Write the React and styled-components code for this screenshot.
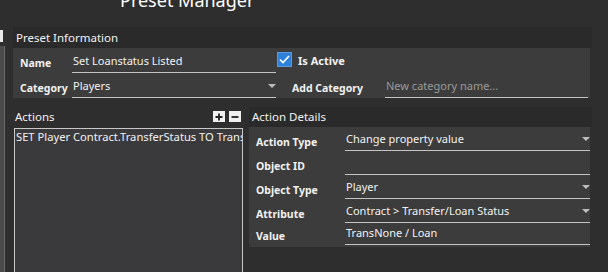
import React from 'react';
import styled, { createGlobalStyle } from 'styled-components';

const GlobalStyle = createGlobalStyle`
  html, body {
    margin: 0;
    padding: 0;
    background: #2e2e2e;
  }
  * {
    box-sizing: border-box;
  }
`;

const Window = styled.div`
  width: 608px;
  height: 272px;
  overflow: hidden;
  background: #2e2e2e;
  color: #f2f2f2;
  font-family: 'Noto Sans', 'Open Sans', sans-serif;
  font-size: 11px;
  display: grid;
  grid-template-columns: 13px 1fr;
`;

const SideStrip = styled.div`
  display: flex;
  flex-direction: column;
  padding-top: 30px;
  gap: 4px;
`;

const SideTab = styled.div`
  width: 3px;
  height: 12px;
  background: #e8e8e8;
`;

const SideBar = styled.div`
  width: 5px;
  flex: 1;
  background: #4a4a4a;
  border-right: 1px solid #6a6a6a;
`;

const Main = styled.div`
  display: flex;
  flex-direction: column;
  padding-right: 16px;
`;

const Title = styled.div`
  font-size: 18px;
  line-height: 18px;
  height: 16px;
  margin-top: -9px;
  margin-bottom: 20px;
  padding-left: 107px;
  color: #ffffff;
`;

const Group = styled.section`
  display: flex;
  flex-direction: column;
`;

const GroupHeader = styled.div`
  height: ${p => p.$h}px;
  line-height: ${p => p.$h}px;
  background: #2a2a2a;
  padding-left: ${p => p.$pad}px;
  font-size: 11.5px;
`;

const GroupBody = styled.div`
  background: #3c3c3c;
  margin-right: 2px;
`;

const InfoGrid = styled.div`
  display: grid;
  grid-template-columns: 52px 204px 16px 93px 203px;
  grid-auto-rows: 25px;
  padding-left: 7px;
`;

const DetailsGrid = styled.div`
  display: grid;
  grid-template-columns: 89px 245px;
  grid-template-rows: 24px 24px 24px 24px 22px;
  padding-left: 7px;
  padding-bottom: 2px;
`;

const Label = styled.div`
  align-self: end;
  grid-column: ${p => p.$col || 'auto'};
  font-weight: 700;
  font-size: 10.5px;
  line-height: 17px;
  padding-bottom: ${p => p.$lift || 0}px;
  white-space: nowrap;
`;

const Field = styled.div`
  align-self: end;
  position: relative;
  height: 21px;
  border-bottom: 1px solid #c4c4c4;
  padding: 0 16px 0 1px;
  line-height: 17px;
  font-size: 11px;
  color: ${p => (p.$placeholder ? '#9a9a9a' : '#f2f2f2')};
  white-space: nowrap;
  overflow: hidden;
`;

const Arrow = styled.span`
  position: absolute;
  right: 0;
  top: 7px;
  width: 0;
  height: 0;
  border-left: 4px solid transparent;
  border-right: 4px solid transparent;
  border-top: 4px solid #bdbdbd;
`;

const CheckCell = styled.div`
  align-self: start;
  padding-top: 4px;
  padding-left: 1px;
`;

const CheckBox = styled.div`
  width: 15px;
  height: 15px;
  background: #2f80d8;
  border: 1px solid #5a9be0;
  display: flex;
  align-items: center;
  justify-content: center;
`;

const CheckLabel = styled.div`
  align-self: start;
  padding-top: 5px;
  padding-left: 6px;
  font-weight: 700;
  font-size: 11px;
  line-height: 16px;
  white-space: nowrap;
  grid-column: span 2;
`;

const Lower = styled.div`
  display: grid;
  grid-template-columns: 229px 343px;
  gap: 6px;
  margin-top: 9px;
  padding-left: 1px;
`;

const ActionsColumn = styled.div`
  display: flex;
  flex-direction: column;
`;

const ActionsHeader = styled.div`
  height: 21px;
  display: flex;
  align-items: center;
  justify-content: space-between;
  padding-left: 1px;
  padding-bottom: 3px;
  font-size: 11.5px;
`;

const ButtonRow = styled.div`
  display: flex;
  gap: 4px;
  padding-right: 2px;
  padding-top: 1px;
`;

const SquareButton = styled.div`
  width: 12px;
  height: 11px;
  background: #f0f0f0;
  display: flex;
  align-items: center;
  justify-content: center;
`;

const ListBox = styled.div`
  height: 160px;
  border: 1px solid #c8c8c8;
  background: #3a3a3c;
  padding: 0 0 0 1px;
  line-height: 16px;
  font-size: 11.2px;
  white-space: nowrap;
  overflow: hidden;
`;

const Check = () => (
  <svg width="11" height="9" viewBox="0 0 11 9">
    <path d="M1 4.5 L4 7.5 L10 1" fill="none" stroke="#ffffff" strokeWidth="1.6" />
  </svg>
);

const Plus = () => (
  <svg width="8" height="8" viewBox="0 0 8 8">
    <path d="M4 0.5 V7.5 M0.5 4 H7.5" stroke="#222" strokeWidth="1.8" />
  </svg>
);

const Minus = () => (
  <svg width="8" height="8" viewBox="0 0 8 8">
    <path d="M0.5 4 H7.5" stroke="#222" strokeWidth="1.8" />
  </svg>
);

const details = [
  { label: 'Action Type', value: 'Change property value', select: true },
  { label: 'Object ID', value: '', select: false },
  { label: 'Object Type', value: 'Player', select: true },
  { label: 'Attribute', value: 'Contract > Transfer/Loan Status', select: true },
  { label: 'Value', value: 'TransNone / Loan', select: false },
];

const App = () => {
  return (
    <>
      <GlobalStyle />
      <Window>
        <SideStrip>
          <SideTab />
          <SideBar />
        </SideStrip>
        <Main>
          <Title>Preset Manager</Title>
          <Group>
            <GroupHeader $h={21} $pad={3}>Preset Information</GroupHeader>
            <GroupBody>
              <InfoGrid>
                <Label $lift={1}>Name</Label>
                <Field>Set Loanstatus Listed</Field>
                <CheckCell>
                  <CheckBox><Check /></CheckBox>
                </CheckCell>
                <CheckLabel>Is Active</CheckLabel>
                <Label $lift={1}>Category</Label>
                <Field>Players<Arrow /></Field>
                <Label $col={4} $lift={1}>Add Category</Label>
                <Field $placeholder>New category name...</Field>
              </InfoGrid>
            </GroupBody>
          </Group>
          <Lower>
            <ActionsColumn>
              <ActionsHeader>
                Actions
                <ButtonRow>
                  <SquareButton><Plus /></SquareButton>
                  <SquareButton><Minus /></SquareButton>
                </ButtonRow>
              </ActionsHeader>
              <ListBox>SET Player Contract.TransferStatus TO TransNone / Loan</ListBox>
            </ActionsColumn>
            <Group>
              <GroupHeader $h={20} $pad={3}>Action Details</GroupHeader>
              <GroupBody>
                <DetailsGrid>
                  {details.map(d => (
                    <React.Fragment key={d.label}>
                      <Label>{d.label}</Label>
                      <Field>
                        {d.value}
                        {d.select && <Arrow />}
                      </Field>
                    </React.Fragment>
                  ))}
                </DetailsGrid>
              </GroupBody>
            </Group>
          </Lower>
        </Main>
      </Window>
    </>
  );
};

export default App;
